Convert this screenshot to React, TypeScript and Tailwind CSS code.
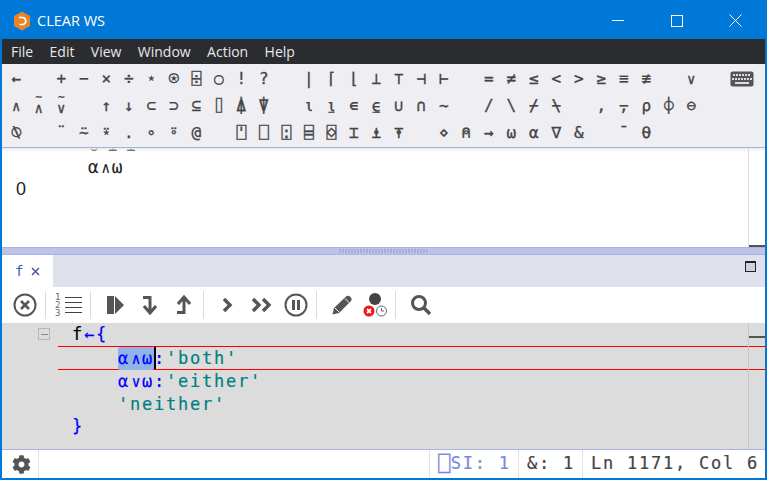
import React from 'react';
import { FaCog } from 'react-icons/fa';

const mono = { fontFamily: '"DejaVu Sans Mono", monospace' };
const sans = { fontFamily: '"Liberation Sans", sans-serif' };

// ∧ and ∨ with a tilde on top, the way this font draws nand and nor
const Tilde = ({ c }: { c: string }) => (
  <span className="flex flex-col items-center leading-none -mt-[3px]">
    <span className="text-[11px] h-[8px] leading-[8px]">~</span>
    <span className="text-[14px] h-[12px] leading-[12px]">{c}</span>
  </span>
);

const row1: React.ReactNode[] = ['←', '', '+', '−', '×', '÷', '⋆', '⍟', '⌹', '○', '!', '?', '', '|', '⌈', '⌊', '⊥', '⊤', '⊣', '⊢', '', '=', '≠', '≤', '<', '>', '≥', '≡', '≢', '', <span className="text-[14px]">∨</span>];
const row2: React.ReactNode[] = [<span className="text-[14px]">∧</span>, <Tilde c="∧" />, <Tilde c="∨" />, '', '↑', '↓', '⊂', '⊃', '⊆', '⌷', '⍋', '⍒', '', '⍳', '⍸', '∊', '⍷', '∪', '∩', '~', '', '/', '\\', '⌿', '⍀', '', ',', '⍪', '⍴', '⌽', '⊖'];
const row3: React.ReactNode[] = ['⍉', '', '¨', '⍨', '⍣', '.', '∘', '⍤', '@', '', '⍞', '⎕', '⍠', '⌸', '⌺', '⌶', '⍎', '⍕', '', '⋄', '⍝', '→', '⍵', '⍺', '∇', '&', '', '¯', '⍬'];

const Sep = ({ className }: { className: string }) => <div className={`w-px h-7 bg-[#d8d8e6] shrink-0 ${className}`} />;

const Keyboard = () => (
  <svg width="24" height="16" viewBox="0 0 24 16">
    <rect x="0.5" y="0.5" width="23" height="15" rx="2" fill="#555" />
    {[3, 6, 9, 12, 15, 18].map((x) => <rect key={x} x={x} y="3" width="2" height="2" fill="#ddd" />)}
    {[2, 5, 8, 11, 14, 17, 20].map((x) => <rect key={x} x={x} y="7" width="2" height="2" fill="#ddd" />)}
    <rect x="5" y="11" width="14" height="2" fill="#ddd" />
  </svg>
);

const Logo = () => (
  <svg width="18" height="20" viewBox="0 0 18 20">
    <path d="M9 0.5 L17 5 V15 L9 19.5 L1 15 V5 Z" fill="#e8842a" />
    <path d="M6 6.5 H10 A3.6 3.6 0 0 1 10 13.5 H6.5" fill="none" stroke="#fff" strokeWidth="1.6" />
  </svg>
);

const Icon = ({ children, w = 24, className }: { children: React.ReactNode; w?: number; className?: string }) => (
  <svg width={w} height="24" viewBox={`0 0 ${w} 24`} className={`shrink-0 ${className ?? ''}`}>{children}</svg>
);

// the ∧ and ∨ are small in this font
const Small = ({ children }: { children: string }) => (
  <span className="inline-block w-[12px] text-center text-[15px] tracking-normal">{children}</span>
);

const PaletteRow = ({ items, right }: { items: React.ReactNode[]; right?: React.ReactNode }) => (
  <div className="flex h-[27px] items-center text-[16px] leading-none text-[#444] [-webkit-text-stroke:0.3px]" style={mono}>
    {items.map((c, i) => (
      <span key={i} className="w-[22.5px] shrink-0 flex justify-center">{c}</span>
    ))}
    {right}
  </div>
);

export default function App() {
  return (
    <div className="w-[767px] h-[480px] overflow-hidden flex flex-col bg-white border-2 border-[#0078d7]" style={{ fontFamily: '"Open Sans", "Liberation Sans", sans-serif' }}>
      {/* title bar */}
      <div className="h-[37px] bg-[#0078d7] flex items-center text-white shrink-0">
        <div className="ml-[11px] mr-[6px]"><Logo /></div>
        <span className="text-[14.5px]">CLEAR WS</span>
        <div className="ml-auto mr-[1px] flex items-center">
          <div className="w-[58px] flex justify-center"><div className="w-3 h-px bg-white" /></div>
          <div className="w-[59px] flex justify-center"><div className="w-3 h-3 border border-white" /></div>
          <div className="w-[58px] flex justify-center">
            <svg width="13" height="13" viewBox="0 0 13 13"><path d="M0.5 0.5 L12.5 12.5 M12.5 0.5 L0.5 12.5" stroke="#fff" /></svg>
          </div>
        </div>
      </div>

      {/* menu */}
      <div className="h-[25px] bg-[#2b2c30] flex items-center gap-[16.4px] pl-[9px] text-[14px] text-[#e8e8e8] shrink-0">
        <span>File</span><span>Edit</span><span>View</span><span>Window</span><span>Action</span><span>Help</span>
      </div>

      {/* APL language bar */}
      <div className="h-[84px] bg-[#eeeef3] border-b border-[#9fb4e4] pl-[3px] pt-[1px] shrink-0">
        <PaletteRow items={row1} right={<div className="ml-[27px]"><Keyboard /></div>} />
        <PaletteRow items={row2} />
        <PaletteRow items={row3} />
      </div>

      {/* session output */}
      <div className="flex-1 min-h-0 overflow-hidden relative bg-white text-[18px] leading-[21px] text-[#222]" style={mono}>
        <div className="absolute left-0 right-0 top-0 h-[4px] bg-linear-to-b from-[#ececec] to-transparent" />
        <div className="-mt-[13px] pl-[87px] tracking-[1.7px] whitespace-pre" style={sans}>0 1 1</div>
        <div className="pl-[86px] tracking-[0.9px] whitespace-pre">⍺<Small>∧</Small>⍵</div>
        <div className="pl-[14px]" style={sans}>0</div>
        <div className="absolute left-[746px] top-0 bottom-0 w-px bg-[#dcdcdc]" />
        <div className="absolute right-0 bottom-0 w-[16px] h-[2px] bg-[#555]" />
      </div>

      {/* splitter */}
      <div className="h-[8px] bg-[#bcc3e6] border-y border-[#a9b4e6] flex justify-center items-center shrink-0">
        <div className="w-[90px] h-[4px] bg-[repeating-linear-gradient(90deg,#a3aede_0_2px,#c2c8ea_2px_3px)]" />
      </div>

      {/* tab strip */}
      <div className="h-[32px] bg-[#dfe1ec] flex shrink-0">
        <div className="w-[51px] bg-white flex items-center gap-[8px] pl-[13px] text-[#3b5bbf] text-[14px]">
          <span style={mono}>f</span>
          <svg width="9" height="9" viewBox="0 0 9 9"><path d="M1 1 L8 8 M8 1 L1 8" stroke="#3b4f9f" strokeWidth="1.4" /></svg>
        </div>
        <div className="ml-auto mr-[9px] mt-[6px] w-[11px] h-[11px] border border-[#222] border-t-2 bg-[#d0d2de]" />
      </div>

      {/* toolbar */}
      <div className="h-[36px] bg-white flex items-center pl-[11px] shrink-0">
        <Icon>
          <circle cx="12" cy="12" r="10.5" fill="none" stroke="#555" strokeWidth="2" />
          <path d="M8 8 L16 16 M16 8 L8 16" stroke="#555" strokeWidth="2.6" />
        </Icon>
        <Sep className="ml-[8px]" />
        <div className="flex items-center ml-[9px] shrink-0">
          <div className="text-[9px] leading-[8px] text-[#666] w-[9px]" style={mono}>1<br />2<br />3</div>
          <div className="flex flex-col gap-[4px] ml-[1px]">
            <div className="w-[17px] h-px bg-[#444]" /><div className="w-[17px] h-px bg-[#444]" /><div className="w-[17px] h-px bg-[#444]" /><div className="w-[17px] h-px bg-[#444]" />
          </div>
        </div>
        <Sep className="ml-[8px]" />
        <Icon w={18} className="ml-[16px]"><path d="M0 3 H7 V21 H0 Z M8 3 L17 12 L8 21 Z" fill="#555" /></Icon>
        <Icon w={14} className="ml-[18px]"><path d="M0 4.5 H7 V19 M1 13 L7 20 L13 13" fill="none" stroke="#555" strokeWidth="3" /></Icon>
        <Icon w={14} className="ml-[20px]"><path d="M0 19.5 H7 V5 M1 11 L7 4 L13 11" fill="none" stroke="#555" strokeWidth="3" /></Icon>
        <Sep className="ml-[12px]" />
        <Icon w={10} className="ml-[19px]"><path d="M1 6 L7 12 L1 18" fill="none" stroke="#555" strokeWidth="3.4" /></Icon>
        <Icon w={20} className="ml-[19px]"><path d="M1 6 L7 12 L1 18 M11 6 L17 12 L11 18" fill="none" stroke="#555" strokeWidth="3.4" /></Icon>
        <Icon className="ml-[12px]">
          <circle cx="12" cy="12" r="10.5" fill="none" stroke="#555" strokeWidth="2" />
          <path d="M8 7 H11 V17 H8 Z M13 7 H16 V17 H13 Z" fill="#555" />
        </Icon>
        <Sep className="ml-[8px]" />
        <Icon w={20} className="ml-[15px]">
          <path d="M0.5 21.5 L2 15 L14 3.5 Q16 2 18 3.5 L18.5 4 Q20.5 6 19 8 L7 20 Z" fill="#555" />
          <path d="M3 15 L7 19 M13 5.5 L17 9.5" stroke="#fff" />
        </Icon>
        <Icon className="ml-[11px]">
          <circle cx="12" cy="6" r="6" fill="#444" />
          <circle cx="6" cy="18" r="5.5" fill="#f01616" />
          <path d="M4 16 L8 20 M8 16 L4 20" stroke="#fff" strokeWidth="1.8" />
          <circle cx="18.5" cy="18" r="5" fill="#fff" stroke="#666" />
          <path d="M18.5 15 V18 H21" fill="none" stroke="#666" />
        </Icon>
        <Sep className="ml-[8px]" />
        <Icon w={20} className="ml-[15px]"><circle cx="8" cy="10" r="6.5" fill="none" stroke="#555" strokeWidth="3" /><path d="M13 15 L19 21" stroke="#555" strokeWidth="3.4" /></Icon>
      </div>

      {/* editor */}
      <div className="h-[126px] bg-[#dcdcdc] flex text-[17px] leading-[23px] tracking-[1.77px] shrink-0 relative [-webkit-text-stroke:0.2px]" style={mono}>
        <div className="w-[56px] shrink-0 relative">
          <div className="absolute left-[36px] top-[5px] w-[12px] h-[12px] border border-[#b5b5b5] flex items-center justify-center">
            <div className="w-[7px] h-px bg-[#888]" />
          </div>
        </div>
        <div className="flex-1 min-w-0 relative">
          <div className="h-[23px] pl-[14px] text-[#0000ff]"><span className="text-black">f</span>←{'{'}</div>
          <div className="h-[24px] leading-[22px] border-y border-[#ff0000] pl-[60px] text-[#0000ff] whitespace-pre">
            <span className="inline-block bg-[#91b3e8] rounded-[2px]">⍺<Small>∧</Small>⍵</span>
            <span className="relative inline-block">:<span className="absolute left-0 top-0 h-[22px] w-[2px] bg-black" /></span>
            <span className="text-[#008080]">'both'</span>
          </div>
          <div className="h-[23px] leading-[22px] pl-[60px] text-[#0000ff] whitespace-pre">⍺<Small>∨</Small>⍵:<span className="text-[#008080]">'either'</span></div>
          <div className="h-[22px] leading-[23px] pl-[60px] text-[#008080] whitespace-pre">'neither'</div>
          <div className="h-[23px] pl-[14px] text-[#0000ff]">{'}'}</div>
        </div>
        <div className="absolute left-[746px] top-0 bottom-0 w-px bg-[#c6c6c6]" />
        <div className="absolute right-0 top-[13px] w-[16px] h-[2px] bg-[#555]" />
      </div>

      {/* status bar */}
      <div className="h-[29px] border-t border-[#a9b4e6] bg-white flex items-stretch text-[17px] tracking-[1.77px] shrink-0 [-webkit-text-stroke:0.2px]" style={mono}>
        <div className="w-[37px] flex items-center justify-center border-r border-[#dfe1f0] text-[#555] pl-[2px]">
          <FaCog size={19} />
        </div>
        <div className="flex-1" />
        <div className="w-[89px] flex items-center border-l border-[#dfe1f0] pl-[8px] text-[#7a88dc] whitespace-pre">
          <span className="text-[21px] leading-none tracking-normal">⎕</span>SI: 1
        </div>
        <div className="w-[64px] flex items-center border-l border-[#dfe1f0] pl-[8px] text-[#444] whitespace-pre">&amp;: 1</div>
        <div className="w-[183px] flex items-center border-l border-[#dfe1f0] pl-[8px] text-[#444] whitespace-pre">Ln 1171, Col 6</div>
      </div>
    </div>
  );
}
